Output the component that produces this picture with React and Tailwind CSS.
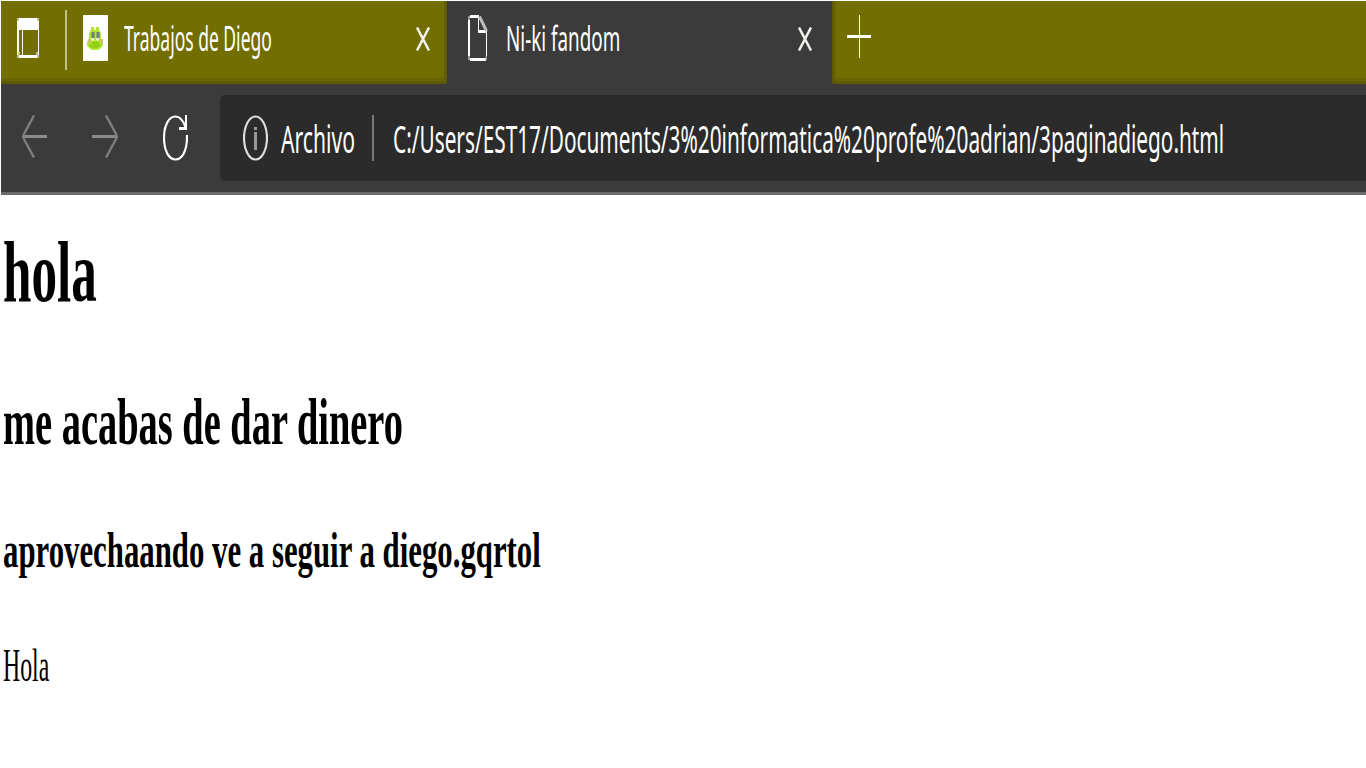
import { useLayoutEffect, useRef, useState } from "react";

// Single line of text condensed horizontally to a fixed width.
function FitText({ width, className = "", as: Tag = "div", children }) {
  const ref = useRef(null);
  const [scale, setScale] = useState(1);
  useLayoutEffect(() => {
    setScale(width / ref.current.offsetWidth);
  }, [width, children]);
  return (
    <Tag className={`shrink-0 ${className}`} style={{ width }}>
      <span
        ref={ref}
        className="inline-block origin-left whitespace-nowrap align-top"
        style={{ transform: `scaleX(${scale})` }}
      >
        {children}
      </span>
    </Tag>
  );
}

function WorkspacesIcon() {
  return (
    <svg className="ml-4 mt-[17px] h-10 w-[22px] shrink-0" viewBox="0 0 22 40" shapeRendering="crispEdges">
      <path fill="#c2c08b" d="M0 0h22v40H0z" />
      <path fill="#fff" d="M2 0h18v3h2v34h-2v3H2v-3H0V3h2z" />
      <path fill="#736e00" d="M2 12h3v25H2zM6 12h15v25H6z" />
      <path fill="#c2c08b" d="M1 34h2v3H1zM19 34h2v3h-2z" />
    </svg>
  );
}

function FrogIcon() {
  return (
    <svg className="ml-4 mt-3.5 h-[46px] w-[25px] shrink-0" viewBox="0 0 25 46">
      <path fill="#fdfdfd" d="M0 0h25v46H0z" />
      <path fill="#b2e62c" d="M8 12h3v3h2v-3h3v3l2 3v6l2 3v3l-2 3-3 2H9l-3-2-2-3v-3l2-4v-5l2-3z" />
      <path fill="#96cf18" d="M6 29h12v2l-3 2H9l-3-2z" />
      <path fill="#6f7f78" d="M8.500 17h3v6h-3zM13.500 17h3v6h-3z" />
      <path fill="#e6f2c8" d="M8 23h3v2.500H8zM13 23h3v2.500h-3z" />
      <path fill="#cfc06c" d="M5 24h3v4H5zM17 24h3v4h-3z" />
      <path fill="#7ec000" d="M9 27h7v1.500H9z" />
    </svg>
  );
}

function CloseIcon({ className }) {
  return (
    <svg className={`h-6 w-[14px] shrink-0 ${className}`} viewBox="0 0 14 24">
      <path d="M1 0.500L13 23.500M13 0.500L1 23.500" stroke="#f2f2ea" strokeWidth="2.500" />
    </svg>
  );
}

function PageIcon() {
  return (
    <svg className="ml-[21px] mt-3.5 h-[46px] w-5 shrink-0" viewBox="0 0 20 46">
      <path fill="#fff" d="M2 0h9v3H2zM0 4h2v38H0zM2 43h16v3H2zM18 17h1v26h-1zM10 2h1v13h8v3h-9z" />
      <path d="M11.500 1.500L18.500 16" stroke="#bbb" strokeWidth="3" />
      <path fill="#999" d="M0 1h2v4H0zM0 41h2v4H0zM17.500 41h1.500v4h-1.500z" />
    </svg>
  );
}

function Tabs() {
  return (
    <div className="flex h-[83px] shrink-0 bg-[#3b3b3b] font-['Noto_Sans',sans-serif] text-[35px] leading-[74px] text-white">
      <div className="flex w-[446px] shrink-0 rounded-br-[4px] bg-[#736e00] shadow-[inset_-2px_-3px_0_#5f5a00,inset_-3px_-6px_0_#6a6500]">
        <WorkspacesIcon />
        <div className="ml-[26px] mt-[9px] h-[60px] w-0.5 shrink-0 bg-[#c2c08b]" />
        <FrogIcon />
        <FitText width={148} className="ml-4">Trabajos de Diego</FitText>
        <CloseIcon className="ml-[144px] mt-[26px]" />
      </div>
      <div className="flex w-[385px] shrink-0">
        <PageIcon />
        <FitText width={114} className="ml-[18px]">Ni-ki fandom</FitText>
        <CloseIcon className="ml-[178px] mt-[26px]" />
      </div>
      <div className="flex grow rounded-bl-[4px] bg-[#736e00] shadow-[inset_2px_-3px_0_#5f5a00,inset_4px_-6px_0_#6a6500]">
        <svg className="ml-[15px] mt-3.5 h-[43px] w-6 shrink-0" viewBox="0 0 24 43">
          <path fill="#fff" d="M12 0h1v43h-1zM0 20h24v3H0z" />
        </svg>
      </div>
    </div>
  );
}

function Toolbar() {
  return (
    <div className="flex h-[111px] shrink-0 border-b-[3px] border-[#6b6969] bg-[#3b3b3b]">
      <svg className="ml-[21px] mt-[31px] h-[43px] w-[25px] shrink-0" viewBox="0 0 25 43">
        <path fill="#8c8c8c" d="M1 20h24v3H1z" />
        <path d="M12 0.500L2.500 18L1 21.500L2.500 25L12 42.500" fill="none" stroke="#7e7e7e" strokeWidth="2.400" />
      </svg>
      <svg className="ml-[44px] mt-[31px] h-[43px] w-[27px] shrink-0" viewBox="0 0 27 43">
        <path fill="#8c8c8c" d="M1 20h25v3H1z" />
        <path d="M15 0.500L24.500 18L26 21.500L24.500 25L15 42.500" fill="none" stroke="#7e7e7e" strokeWidth="2.400" />
      </svg>
      <svg className="ml-[45px] mt-[31px] h-[46px] w-[25px] shrink-0" viewBox="0 0 25 46">
        <path d="M24 20C24.500 36 19 44.500 12.500 44.500C6 44.500 1 36 1 23C1 10 6 1.500 12.500 1.500C17 1.500 20 5 22.500 12" fill="none" stroke="#fff" strokeWidth="2.200" />
        <path fill="#fff" d="M22 0h2v15h-8v-3h6z" />
      </svg>
      <div className="ml-8 mt-[11px] flex h-[86px] grow rounded-l-[5px] bg-[#2b2b2b] font-['Noto_Sans',sans-serif] text-[38px] leading-[86px] text-white">
        <svg className="ml-[23px] mt-5 h-[46px] w-[25px] shrink-0" viewBox="0 0 25 46">
          <ellipse cx="12.500" cy="23" rx="11.500" ry="21.500" fill="none" stroke="#ddd" strokeWidth="2.200" />
          <path fill="#999" d="M11 12h3v3h-3zM11 17h3v18h-3z" />
        </svg>
        <FitText width={74} className="ml-[13px]">Archivo</FitText>
        <div className="ml-[17px] mt-5 h-[46px] w-0.5 shrink-0 bg-[#7a7a7a]" />
        <FitText width={831} className="ml-[19px]">
          C:/Users/EST17/Documents/3%20informatica%20profe%20adrian/3paginadiego.html
        </FitText>
      </div>
    </div>
  );
}

export default function App() {
  return (
    <div className="flex h-screen w-full flex-col overflow-hidden bg-white pl-px pt-px">
      <Tabs />
      <Toolbar />
      <main className="pl-0.5 font-['Liberation_Serif',serif] text-black">
        <FitText as="h1" width={94} className="mt-[31px] h-[90px] text-[87px] font-bold leading-[91px]">hola</FitText>
        <FitText as="h2" width={400} className="mt-[70px] h-[70px] text-[66px] font-bold leading-[71px]">me acabas de dar dinero</FitText>
        <FitText as="h3" width={538} className="mt-[67px] h-[54px] text-[51px] font-bold leading-[55px]">aprovechaando ve a seguir a diego.gqrtol</FitText>
        <FitText as="p" width={46} className="mt-16 h-12 text-[47px] leading-[49px]">Hola</FitText>
      </main>
    </div>
  );
}
